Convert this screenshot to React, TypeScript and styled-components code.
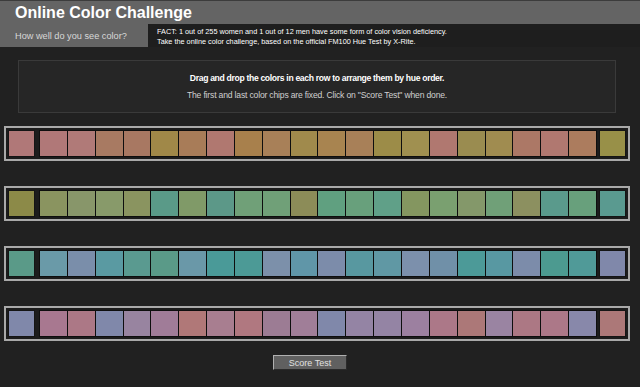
import React from 'react';
import styled, { createGlobalStyle } from 'styled-components';

const rows: string[][] = [
  [
    '#b07878', '#b07878', '#b07a78', '#a87a62', '#a87862', '#a08848', '#a87c58', '#b07870',
    '#a8804c', '#a88058', '#a08a4c', '#a88450', '#a88058', '#9c8c48', '#a09050', '#b07870',
    '#9a8c50', '#a08c50', '#ac7866', '#b07870', '#ac7c5e', '#989048',
  ],
  [
    '#8c8a48', '#8a9460', '#88966a', '#889a6a', '#8a9460', '#5a9a88', '#809a68', '#5c9888',
    '#70a078', '#70a078', '#8c8c58', '#60a080', '#68a07c', '#60a088', '#849660', '#7aa070',
    '#84986a', '#70a078', '#8c9060', '#5a9a8c', '#68a07c', '#5a9a90',
  ],
  [
    '#5a9a88', '#6a9aa8', '#7a8eaa', '#5a9aa2', '#5a9a90', '#5a9a88', '#6a98a8', '#4a9a98',
    '#4c9a96', '#7c90aa', '#6096a8', '#7c8caa', '#5898a0', '#6098a4', '#7c90ac', '#7090a8',
    '#4c9a98', '#5898a2', '#7c8caa', '#4c9a90', '#509a98', '#8088aa',
  ],
  [
    '#8088aa', '#a87890', '#ac7886', '#8088aa', '#9884a0', '#a07c98', '#b07878', '#a87e90',
    '#b07880', '#9c7c94', '#a07e98', '#8088aa', '#9484a4', '#9484a4', '#9c80a0', '#ac7888',
    '#ac7878', '#9a84a2', '#ac7884', '#ac7888', '#8888aa', '#ac7878',
  ],
];

export default function App() {
  return (
    <>
      <GlobalStyle />
      <Page>
        <TitleBar>
          <Title>Online Color Challenge</Title>
        </TitleBar>
        <SubBar>
          <Tagline>How well do you see color?</Tagline>
          <Fact>
            <div>FACT: 1 out of 255 women and 1 out of 12 men have some form of color vision deficiency.</div>
            <div>Take the online color challenge, based on the official FM100 Hue Test by X-Rite.</div>
          </Fact>
        </SubBar>

        <InfoBox>
          <InfoLead>Drag and drop the colors in each row to arrange them by hue order.</InfoLead>
          <InfoNote>The first and last color chips are fixed. Click on "Score Test" when done.</InfoNote>
        </InfoBox>

        <Rows>
          {rows.map((chips, i) => (
            <ChipRow key={i}>
              <FixedChip $color={chips[0]} />
              <Strip>
                {chips.slice(1, -1).map((c, j) => (
                  <Chip key={j} $color={c} />
                ))}
              </Strip>
              <FixedChip $color={chips[chips.length - 1]} />
            </ChipRow>
          ))}
        </Rows>

        <ScoreButton>Score Test</ScoreButton>
      </Page>
    </>
  );
}

const GlobalStyle = createGlobalStyle`
  html, body {
    margin: 0;
    background: #212121;
  }
  body {
    font-family: "Liberation Sans", Arial, sans-serif;
  }
`;

const Page = styled.div`
  width: 640px;
  height: 387px;
  background: #212121;
  overflow: hidden;
`;

const TitleBar = styled.div`
  height: 23px;
  border-top: 1px solid #3c3c3c;
  background: #646464;
  display: flex;
  align-items: center;
  padding-left: 15px;
`;

const Title = styled.h1`
  margin: 0;
  font-size: 16px;
  font-weight: bold;
  color: #fff;
`;

const SubBar = styled.div`
  display: flex;
  height: 23px;
`;

const Tagline = styled.div`
  width: 133px;
  padding-left: 15px;
  background: #646464;
  color: #d8d8d8;
  font-size: 9.2px;
  display: flex;
  align-items: center;
`;

const Fact = styled.div`
  padding: 3px 0 0 9px;
  color: #fff;
  font-size: 7.3px;
  line-height: 10px;
  background: #1e1e1e;
  flex: 1;
`;

const InfoBox = styled.div`
  margin: 13px 0 0 18px;
  width: 596px;
  height: 51px;
  border: 1px solid #3a3a3a;
  background: #262626;
  display: flex;
  flex-direction: column;
  align-items: center;
  justify-content: center;
  gap: 7px;
`;

const InfoLead = styled.div`
  color: #fff;
  font-size: 8.6px;
  font-weight: bold;
  letter-spacing: -0.32px;
`;

const InfoNote = styled.div`
  color: #d0d0d0;
  font-size: 8.6px;
  letter-spacing: -0.18px;
`;

const Rows = styled.div`
  margin: 13px 0 0 4px;
  width: 626px;
  display: flex;
  flex-direction: column;
  gap: 25px;
`;

const ChipRow = styled.div`
  box-sizing: border-box;
  height: 35px;
  border: 2px solid #a9a9a9;
  padding: 2px;
  background: #1c1c1c;
  display: flex;
`;

const FixedChip = styled.div<{ $color: string }>`
  box-sizing: border-box;
  width: 27px;
  height: 27px;
  border: 1px solid #151515;
  background: ${(p) => p.$color};
`;

const Strip = styled.div`
  flex: 1;
  display: flex;
  gap: 1px;
  margin: 0 2px 0 4px;
  background: #0e0e0e;
  border: 1px solid #0e0e0e;
  border-top: 0;
  border-bottom: 0;
`;

const Chip = styled.div<{ $color: string }>`
  flex: 1;
  background: ${(p) => p.$color};
  border-top: 1px solid #0e0e0e;
  border-bottom: 1px solid #0e0e0e;
`;

const ScoreButton = styled.button`
  display: block;
  margin: 14px 0 0 273px;
  width: 74px;
  height: 15px;
  padding: 0;
  background: #606060;
  color: #e0e0e0;
  font-family: "Liberation Sans", Arial, sans-serif;
  font-size: 9px;
  border-top: 1px solid #b0b0b0;
  border-left: 1px solid #b0b0b0;
  border-right: 1px solid #2a2a2a;
  border-bottom: 1px solid #2a2a2a;
`;
